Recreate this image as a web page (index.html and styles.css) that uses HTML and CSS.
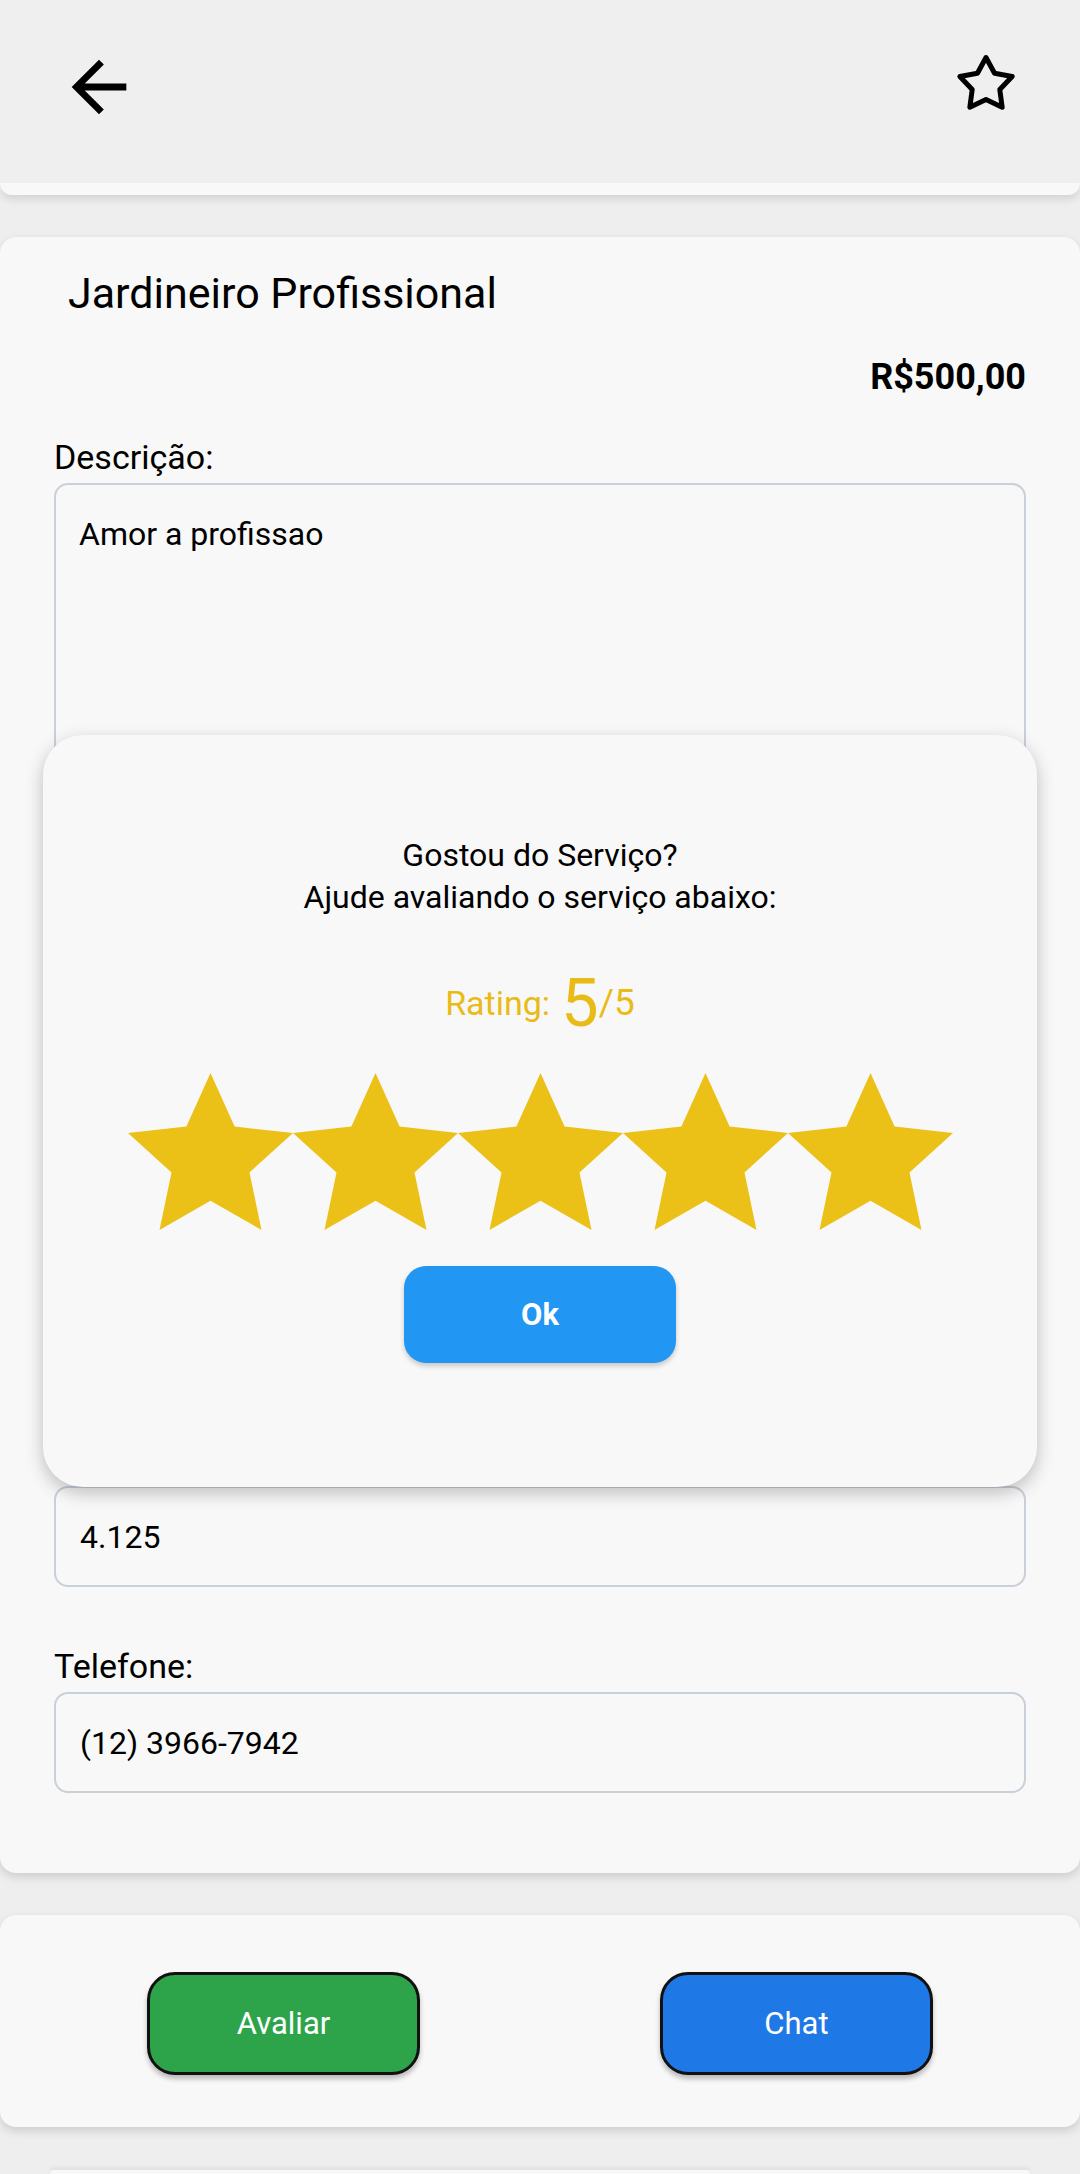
FILE: index.html
```html
<!DOCTYPE html>
<html lang="pt-BR">
<head>
<meta charset="utf-8">
<title>Jardineiro Profissional</title>
<link rel="stylesheet" href="styles.css">
</head>
<body>
<div class="screen">
  <header class="appbar">
    <button class="icon-btn back" aria-label="Voltar">
      <svg width="82" height="82" viewBox="0 0 24 24"><path d="M20 11H7.83l5.59-5.59L12 4l-8 8 8 8 1.41-1.41L7.83 13H20v-2z" fill="#000"/></svg>
    </button>
    <button class="icon-btn fav" aria-label="Favoritar">
      <svg width="70" height="70" viewBox="0 0 70 70"><polygon points="35,9.5 43.52,25.27 61.16,28.5 48.79,41.48 51.16,59.25 35,51.5 18.84,59.25 21.21,41.48 8.84,28.5 26.48,25.27" fill="none" stroke="#000" stroke-width="5" stroke-linejoin="round"/></svg>
    </button>
  </header>
  <div class="peek-card"></div>

  <main class="card details">
    <h1 class="title">Jardineiro Profissional</h1>
    <div class="price">R$500,00</div>
    <div class="field">
      <div class="label">Descrição:</div>
      <div class="box textarea">Amor a profissao</div>
    </div>
    <div class="field">
      <div class="label"></div>
      <div class="box"></div>
    </div>
    <div class="field">
      <div class="label"></div>
      <div class="box"></div>
    </div>
    <div class="field">
      <div class="label"></div>
      <div class="box"></div>
    </div>
    <div class="field">
      <div class="label"></div>
      <div class="box">4.125</div>
    </div>
    <div class="field">
      <div class="label">Telefone:</div>
      <div class="box">(12) 3966-7942</div>
    </div>
  </main>

  <div class="card actions">
    <button class="btn btn-green">Avaliar</button>
    <button class="btn btn-blue">Chat</button>
  </div>
  <div class="peek-bottom"></div>

  <div class="dialog" role="dialog">
    <p class="dialog-text">Gostou do Serviço?<br>Ajude avaliando o serviço abaixo:</p>
    <div class="rating">
      <span class="rating-label">Rating:</span>
      <span class="rating-value">5</span>
      <span class="rating-max">/5</span>
    </div>
    <div class="stars">
      <svg class="star" width="165" height="157" viewBox="0 0 165 157"><polygon points="82.5,0 106.6,53.58 165,59.94 121.49,99.42 133.49,156.93 82.5,127.75 31.51,156.93 43.51,99.42 0,59.94 58.4,53.58"/></svg>
      <svg class="star" width="165" height="157" viewBox="0 0 165 157"><polygon points="82.5,0 106.6,53.58 165,59.94 121.49,99.42 133.49,156.93 82.5,127.75 31.51,156.93 43.51,99.42 0,59.94 58.4,53.58"/></svg>
      <svg class="star" width="165" height="157" viewBox="0 0 165 157"><polygon points="82.5,0 106.6,53.58 165,59.94 121.49,99.42 133.49,156.93 82.5,127.75 31.51,156.93 43.51,99.42 0,59.94 58.4,53.58"/></svg>
      <svg class="star" width="165" height="157" viewBox="0 0 165 157"><polygon points="82.5,0 106.6,53.58 165,59.94 121.49,99.42 133.49,156.93 82.5,127.75 31.51,156.93 43.51,99.42 0,59.94 58.4,53.58"/></svg>
      <svg class="star" width="165" height="157" viewBox="0 0 165 157"><polygon points="82.5,0 106.6,53.58 165,59.94 121.49,99.42 133.49,156.93 82.5,127.75 31.51,156.93 43.51,99.42 0,59.94 58.4,53.58"/></svg>
    </div>
    <button class="ok-btn">Ok</button>
  </div>
</div>
</body>
</html>
```

FILE: styles.css
```css
* { box-sizing: border-box; }

html, body {
  margin: 0;
  padding: 0;
  background: #eeeeee;
}

body {
  font-family: Roboto, "Noto Sans", "Liberation Sans", sans-serif;
  color: #000;
}

.screen {
  position: relative;
  width: 1080px;
  height: 2174px;
  overflow: hidden;
  display: flex;
  flex-direction: column;
}

.appbar {
  height: 183px;
  flex: none;
  display: flex;
  justify-content: space-between;
  align-items: flex-start;
  padding: 46px 59px 0 58px;
  background: #efefef;
  position: relative;
  z-index: 2;
}

.icon-btn {
  border: 0;
  padding: 0;
  margin: 0;
  background: transparent;
  display: block;
  line-height: 0;
}

.icon-btn svg { display: block; }

.fav { margin-top: 2px; }

.peek-card {
  height: 12px;
  flex: none;
  background: #f8f8f8;
  border-radius: 0 0 14px 14px;
  box-shadow: 0 4px 8px rgba(0, 0, 0, 0.12);
  position: relative;
  z-index: 1;
}

.card {
  background: #f8f8f8;
  border-radius: 16px;
  box-shadow: 0 4px 10px rgba(0, 0, 0, 0.14);
  flex: none;
}

.details {
  margin-top: 42px;
  padding: 33px 54px 80px 54px;
  display: flex;
  flex-direction: column;
}

.title {
  margin: 0 0 0 14px;
  font-size: 43px;
  font-weight: 400;
  line-height: 47px;
}

.price {
  margin-top: 40px;
  text-align: right;
  font-size: 36px;
  font-weight: 700;
  line-height: 40px;
}

.field {
  display: flex;
  flex-direction: column;
  margin-top: 59px;
}

.price + .field { margin-top: 40px; }

.label {
  font-size: 34px;
  line-height: 40px;
  min-height: 40px;
  margin-bottom: 6px;
}

.box {
  height: 101px;
  border: 2px solid #c9d0da;
  border-radius: 14px;
  padding: 0 24px;
  font-size: 32px;
  display: flex;
  align-items: center;
}

.box.textarea {
  height: 280px;
  align-items: flex-start;
  padding: 30px 23px 0 23px;
}

.actions {
  margin-top: 42px;
  height: 212px;
  display: flex;
  justify-content: center;
  align-items: center;
  gap: 240px;
  padding-top: 4px;
}

.btn {
  width: 273px;
  height: 103px;
  border: 3px solid #111;
  border-radius: 28px;
  color: #fff;
  font-family: Roboto, "Noto Sans", sans-serif;
  font-size: 31px;
  box-shadow: 0 4px 5px rgba(0, 0, 0, 0.25);
}

.btn-green { background: #2ea44a; }
.btn-blue { background: #1e78e6; }

.peek-bottom {
  margin: 43px 50px 0 50px;
  height: 6px;
  background: #f8f8f8;
  border-radius: 6px 6px 0 0;
  box-shadow: 0 -2px 4px rgba(0, 0, 0, 0.08);
}

/* Rating dialog */
.dialog {
  position: absolute;
  top: 735px;
  left: 43px;
  width: 994px;
  height: 752px;
  background: #f8f8f8;
  border-radius: 40px;
  box-shadow: 0 6px 18px rgba(0, 0, 0, 0.24);
  display: flex;
  flex-direction: column;
  align-items: center;
  padding-top: 99px;
  z-index: 5;
}

.dialog-text {
  margin: 0;
  font-size: 32px;
  line-height: 42px;
  text-align: center;
}

.rating {
  margin-top: 47px;
  display: flex;
  align-items: center;
  color: #e8bb17;
  height: 75px;
}

.rating-label { font-size: 34px; margin-right: 11px; }
.rating-value { font-size: 67px; }
.rating-max { font-size: 37px; }

.stars {
  margin-top: 33px;
  display: flex;
}

.star { display: block; }
.star polygon { fill: #ebc117; }

.ok-btn {
  margin-top: 36px;
  width: 272px;
  height: 97px;
  border: 0;
  border-radius: 22px;
  background: #2196f3;
  color: #fff;
  font-family: Roboto, "Noto Sans", sans-serif;
  font-size: 31px;
  font-weight: 700;
  box-shadow: 0 3px 5px rgba(0, 0, 0, 0.2);
}
```
